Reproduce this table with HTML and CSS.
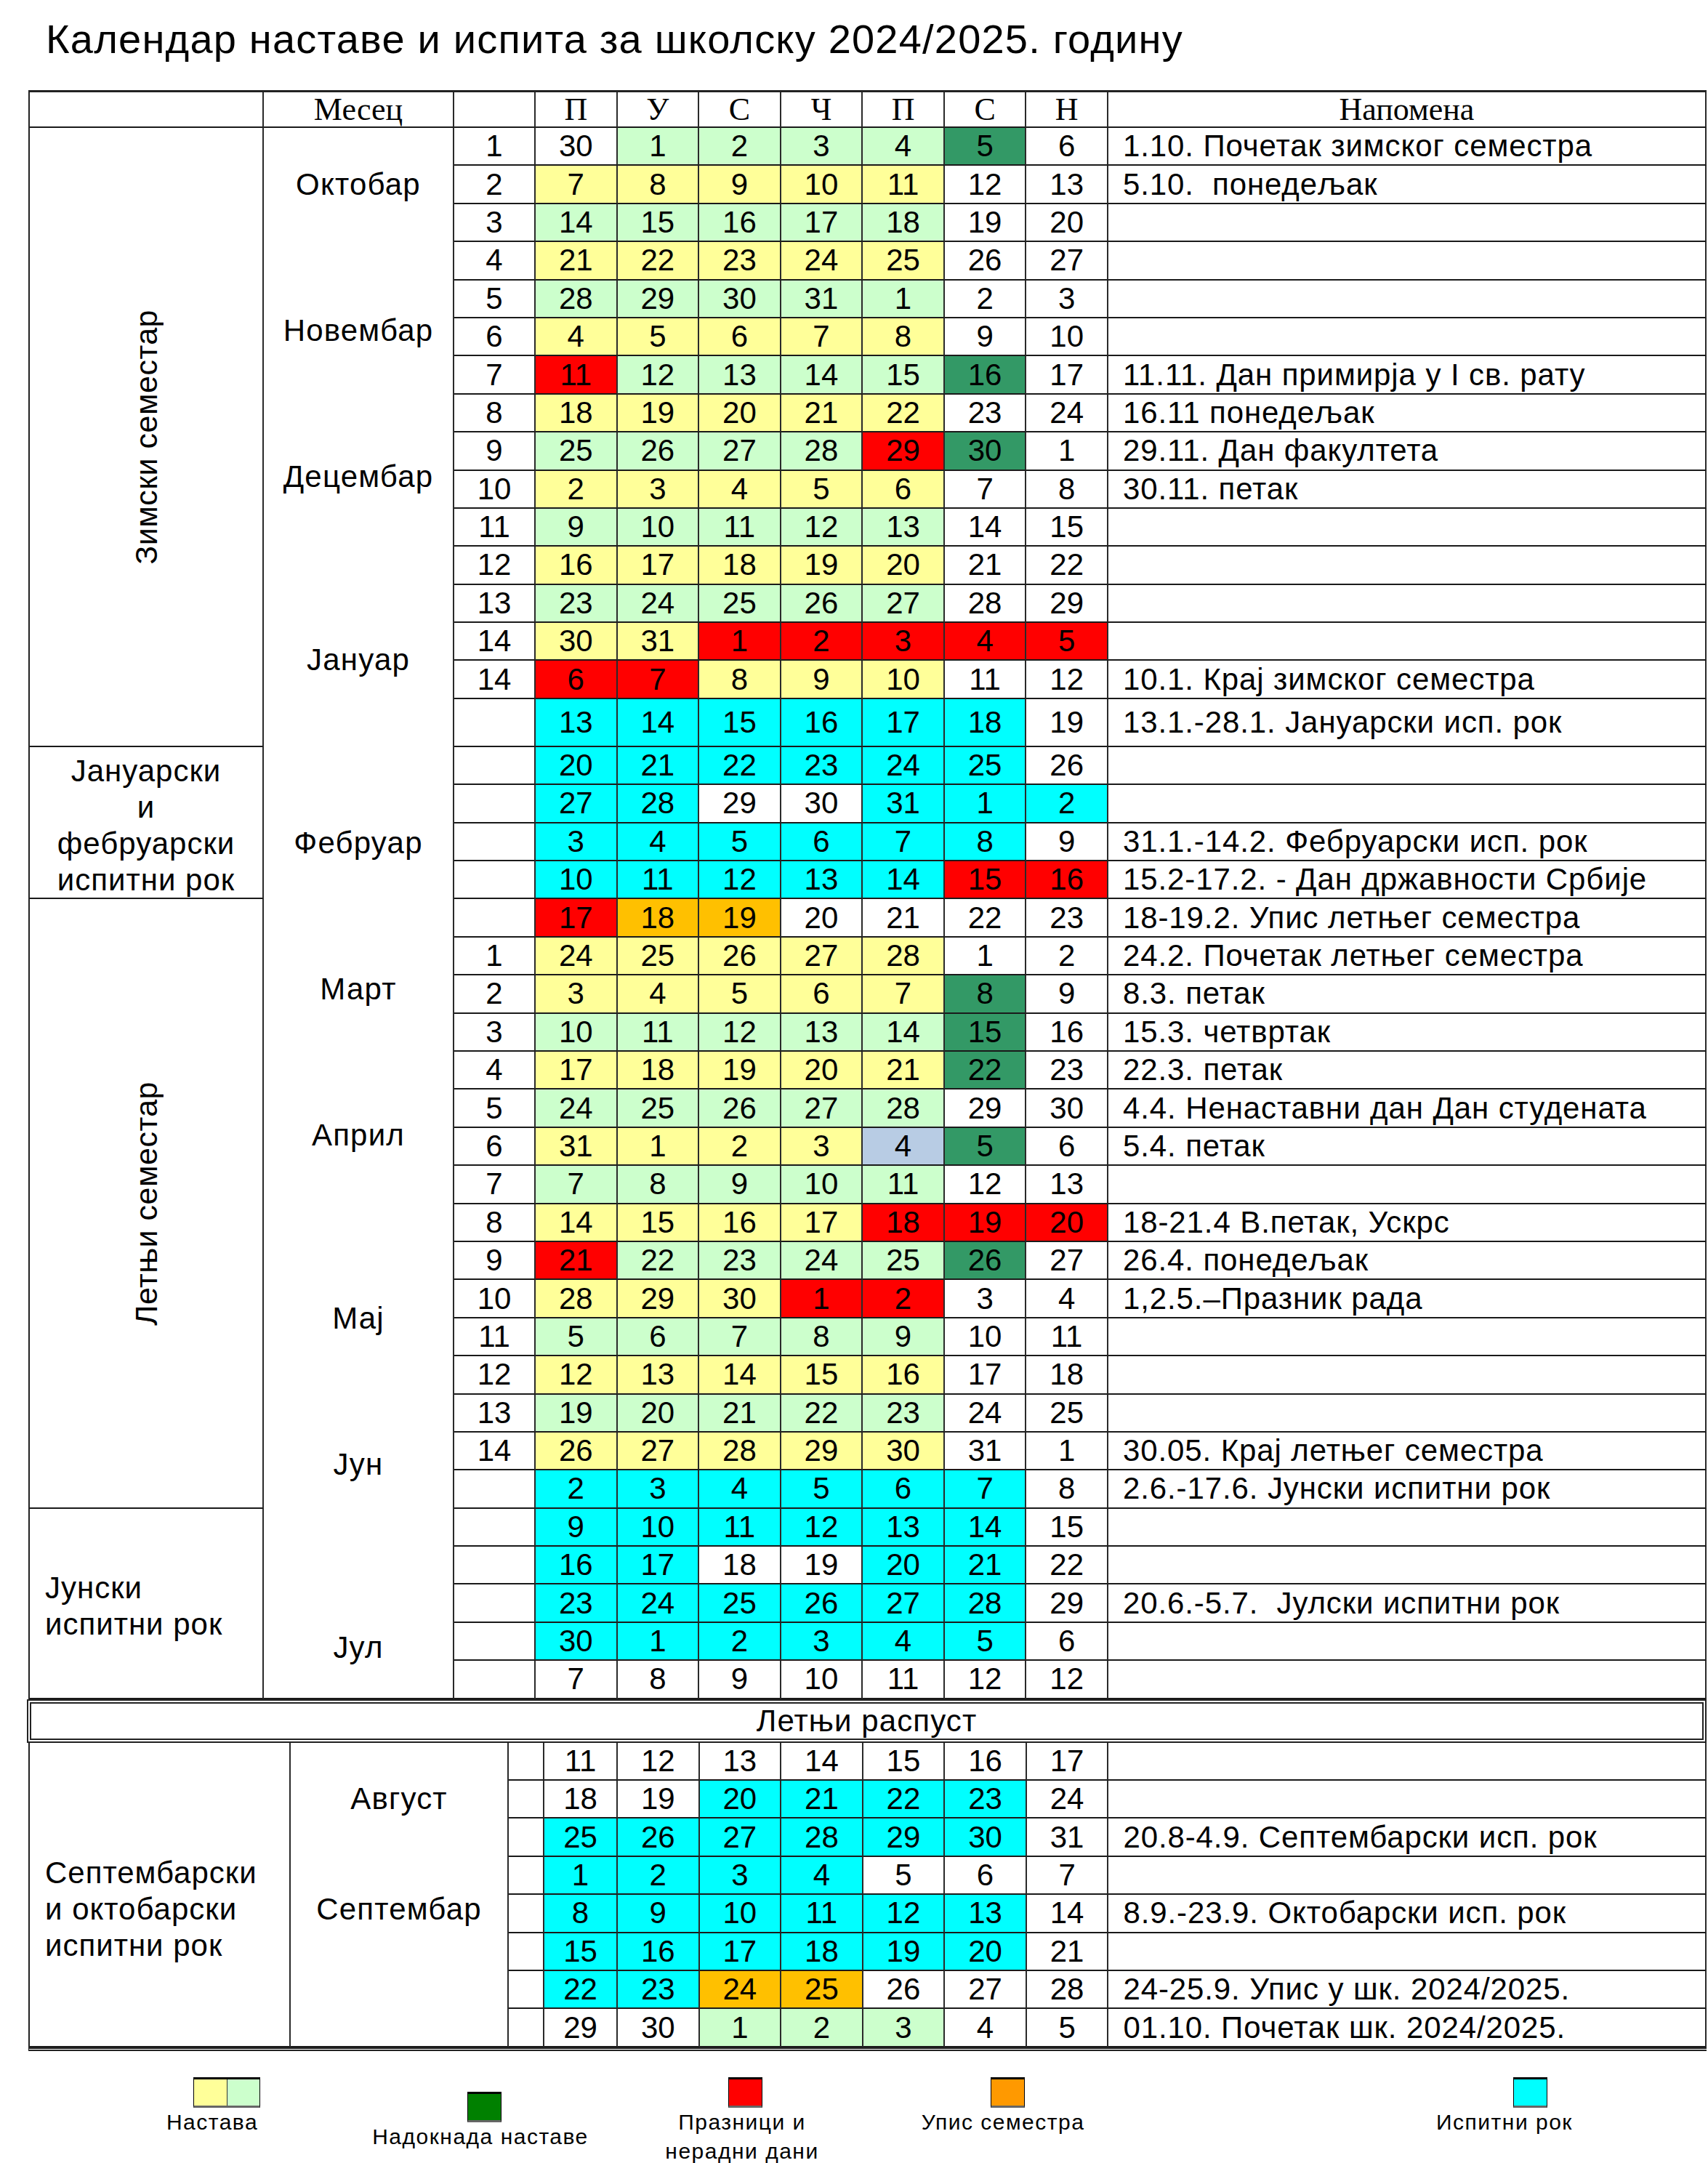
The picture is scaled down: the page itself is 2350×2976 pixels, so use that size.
FILE: index.html
```html
<!DOCTYPE html>
<html lang="sr">
<head>
<meta charset="utf-8">
<title>Календар наставе и испита</title>
<link rel="stylesheet" href="styles.css">
</head>
<body>
<h1 class="title">Календар наставе и испита за школску 2024/2025. годину</h1>

<div class="cal cal-top">
  <div class="c h"></div><div class="c h">Месец</div><div class="c h"></div>
  <div class="c h">П</div><div class="c h">У</div><div class="c h">С</div><div class="c h">Ч</div><div class="c h">П</div><div class="c h">С</div><div class="c h">Н</div>
  <div class="c h">Напомена</div>

  <div class="c sem sem-zimski"><span class="vt">Зимски семестар</span></div>
  <div class="c sem sem-jan"><div class="ml">Јануарски<br>и<br>фебруарски<br>испитни рок</div></div>
  <div class="c sem sem-letnji"><span class="vt">Летњи семестар</span></div>
  <div class="c sem sem-jun left"><div class="ml">Јунски<br>испитни рок</div></div>
  <div class="c months months-top">
    <div class="mo">Октобар</div>
    <div class="mo mo-s">Новембар</div>
    <div class="mo mo-s">Децембар</div>
    <div class="mo mo-l">Јануар</div>
    <div class="mo mo-l">Фебруар</div>
    <div class="mo mo-s">Март</div>
    <div class="mo mo-s">Април</div>
    <div class="mo mo-l">Мај</div>
    <div class="mo mo-s">Јун</div>
    <div class="mo mo-l">Јул</div>
  </div>

  <div class="c">1</div><div class="c">30</div><div class="c g">1</div><div class="c g">2</div><div class="c g">3</div><div class="c g">4</div><div class="c dg">5</div><div class="c">6</div><div class="c n">1.10. Почетак зимског семестра</div>
  <div class="c">2</div><div class="c y">7</div><div class="c y">8</div><div class="c y">9</div><div class="c y">10</div><div class="c y">11</div><div class="c">12</div><div class="c">13</div><div class="c n">5.10.  понедељак</div>
  <div class="c">3</div><div class="c g">14</div><div class="c g">15</div><div class="c g">16</div><div class="c g">17</div><div class="c g">18</div><div class="c">19</div><div class="c">20</div><div class="c n"></div>
  <div class="c">4</div><div class="c y">21</div><div class="c y">22</div><div class="c y">23</div><div class="c y">24</div><div class="c y">25</div><div class="c">26</div><div class="c">27</div><div class="c n"></div>
  <div class="c">5</div><div class="c g">28</div><div class="c g">29</div><div class="c g">30</div><div class="c g">31</div><div class="c g">1</div><div class="c">2</div><div class="c">3</div><div class="c n"></div>
  <div class="c">6</div><div class="c y">4</div><div class="c y">5</div><div class="c y">6</div><div class="c y">7</div><div class="c y">8</div><div class="c">9</div><div class="c">10</div><div class="c n"></div>
  <div class="c">7</div><div class="c r">11</div><div class="c g">12</div><div class="c g">13</div><div class="c g">14</div><div class="c g">15</div><div class="c dg">16</div><div class="c">17</div><div class="c n">11.11. Дан примирја у I св. рату</div>
  <div class="c">8</div><div class="c y">18</div><div class="c y">19</div><div class="c y">20</div><div class="c y">21</div><div class="c y">22</div><div class="c">23</div><div class="c">24</div><div class="c n">16.11 понедељак</div>
  <div class="c">9</div><div class="c g">25</div><div class="c g">26</div><div class="c g">27</div><div class="c g">28</div><div class="c r">29</div><div class="c dg">30</div><div class="c">1</div><div class="c n">29.11. Дан факултета</div>
  <div class="c">10</div><div class="c y">2</div><div class="c y">3</div><div class="c y">4</div><div class="c y">5</div><div class="c y">6</div><div class="c">7</div><div class="c">8</div><div class="c n">30.11. петак</div>
  <div class="c">11</div><div class="c g">9</div><div class="c g">10</div><div class="c g">11</div><div class="c g">12</div><div class="c g">13</div><div class="c">14</div><div class="c">15</div><div class="c n"></div>
  <div class="c">12</div><div class="c y">16</div><div class="c y">17</div><div class="c y">18</div><div class="c y">19</div><div class="c y">20</div><div class="c">21</div><div class="c">22</div><div class="c n"></div>
  <div class="c">13</div><div class="c g">23</div><div class="c g">24</div><div class="c g">25</div><div class="c g">26</div><div class="c g">27</div><div class="c">28</div><div class="c">29</div><div class="c n"></div>
  <div class="c">14</div><div class="c y">30</div><div class="c y">31</div><div class="c r">1</div><div class="c r">2</div><div class="c r">3</div><div class="c r">4</div><div class="c r">5</div><div class="c n"></div>
  <div class="c">14</div><div class="c r">6</div><div class="c r">7</div><div class="c y">8</div><div class="c y">9</div><div class="c y">10</div><div class="c">11</div><div class="c">12</div><div class="c n">10.1. Крај зимског семестра</div>
  <div class="c"></div><div class="c cy">13</div><div class="c cy">14</div><div class="c cy">15</div><div class="c cy">16</div><div class="c cy">17</div><div class="c cy">18</div><div class="c">19</div><div class="c n">13.1.-28.1. Јануарски исп. рок</div>
  <div class="c"></div><div class="c cy">20</div><div class="c cy">21</div><div class="c cy">22</div><div class="c cy">23</div><div class="c cy">24</div><div class="c cy">25</div><div class="c">26</div><div class="c n"></div>
  <div class="c"></div><div class="c cy">27</div><div class="c cy">28</div><div class="c">29</div><div class="c">30</div><div class="c cy">31</div><div class="c cy">1</div><div class="c cy">2</div><div class="c n"></div>
  <div class="c"></div><div class="c cy">3</div><div class="c cy">4</div><div class="c cy">5</div><div class="c cy">6</div><div class="c cy">7</div><div class="c cy">8</div><div class="c">9</div><div class="c n">31.1.-14.2. Фебруарски исп. рок</div>
  <div class="c"></div><div class="c cy">10</div><div class="c cy">11</div><div class="c cy">12</div><div class="c cy">13</div><div class="c cy">14</div><div class="c r">15</div><div class="c r">16</div><div class="c n">15.2-17.2. - Дан државности Србије</div>
  <div class="c"></div><div class="c r">17</div><div class="c o">18</div><div class="c o">19</div><div class="c">20</div><div class="c">21</div><div class="c">22</div><div class="c">23</div><div class="c n">18-19.2. Упис летњег семестра</div>
  <div class="c">1</div><div class="c y">24</div><div class="c y">25</div><div class="c y">26</div><div class="c y">27</div><div class="c y">28</div><div class="c">1</div><div class="c">2</div><div class="c n">24.2. Почетак летњег семестра</div>
  <div class="c">2</div><div class="c y">3</div><div class="c y">4</div><div class="c y">5</div><div class="c y">6</div><div class="c y">7</div><div class="c dg">8</div><div class="c">9</div><div class="c n">8.3. петак</div>
  <div class="c">3</div><div class="c g">10</div><div class="c g">11</div><div class="c g">12</div><div class="c g">13</div><div class="c g">14</div><div class="c dg">15</div><div class="c">16</div><div class="c n">15.3. четвртак</div>
  <div class="c">4</div><div class="c y">17</div><div class="c y">18</div><div class="c y">19</div><div class="c y">20</div><div class="c y">21</div><div class="c dg">22</div><div class="c">23</div><div class="c n">22.3. петак</div>
  <div class="c">5</div><div class="c g">24</div><div class="c g">25</div><div class="c g">26</div><div class="c g">27</div><div class="c g">28</div><div class="c">29</div><div class="c">30</div><div class="c n">4.4. Ненаставни дан Дан студената</div>
  <div class="c">6</div><div class="c y">31</div><div class="c y">1</div><div class="c y">2</div><div class="c y">3</div><div class="c lb">4</div><div class="c dg">5</div><div class="c">6</div><div class="c n">5.4. петак</div>
  <div class="c">7</div><div class="c g">7</div><div class="c g">8</div><div class="c g">9</div><div class="c g">10</div><div class="c g">11</div><div class="c">12</div><div class="c">13</div><div class="c n"></div>
  <div class="c">8</div><div class="c y">14</div><div class="c y">15</div><div class="c y">16</div><div class="c y">17</div><div class="c r">18</div><div class="c r">19</div><div class="c r">20</div><div class="c n">18-21.4 В.петак, Ускрс</div>
  <div class="c">9</div><div class="c r">21</div><div class="c g">22</div><div class="c g">23</div><div class="c g">24</div><div class="c g">25</div><div class="c dg">26</div><div class="c">27</div><div class="c n">26.4. понедељак</div>
  <div class="c">10</div><div class="c y">28</div><div class="c y">29</div><div class="c y">30</div><div class="c r">1</div><div class="c r">2</div><div class="c">3</div><div class="c">4</div><div class="c n">1,2.5.–Празник рада</div>
  <div class="c">11</div><div class="c g">5</div><div class="c g">6</div><div class="c g">7</div><div class="c g">8</div><div class="c g">9</div><div class="c">10</div><div class="c">11</div><div class="c n"></div>
  <div class="c">12</div><div class="c y">12</div><div class="c y">13</div><div class="c y">14</div><div class="c y">15</div><div class="c y">16</div><div class="c">17</div><div class="c">18</div><div class="c n"></div>
  <div class="c">13</div><div class="c g">19</div><div class="c g">20</div><div class="c g">21</div><div class="c g">22</div><div class="c g">23</div><div class="c">24</div><div class="c">25</div><div class="c n"></div>
  <div class="c">14</div><div class="c y">26</div><div class="c y">27</div><div class="c y">28</div><div class="c y">29</div><div class="c y">30</div><div class="c">31</div><div class="c">1</div><div class="c n">30.05. Крај летњег семестра</div>
  <div class="c"></div><div class="c cy">2</div><div class="c cy">3</div><div class="c cy">4</div><div class="c cy">5</div><div class="c cy">6</div><div class="c cy">7</div><div class="c">8</div><div class="c n">2.6.-17.6. Јунски испитни рок</div>
  <div class="c"></div><div class="c cy">9</div><div class="c cy">10</div><div class="c cy">11</div><div class="c cy">12</div><div class="c cy">13</div><div class="c cy">14</div><div class="c">15</div><div class="c n"></div>
  <div class="c"></div><div class="c cy">16</div><div class="c cy">17</div><div class="c">18</div><div class="c">19</div><div class="c cy">20</div><div class="c cy">21</div><div class="c">22</div><div class="c n"></div>
  <div class="c"></div><div class="c cy">23</div><div class="c cy">24</div><div class="c cy">25</div><div class="c cy">26</div><div class="c cy">27</div><div class="c cy">28</div><div class="c">29</div><div class="c n">20.6.-5.7.  Јулски испитни рок</div>
  <div class="c"></div><div class="c cy">30</div><div class="c cy">1</div><div class="c cy">2</div><div class="c cy">3</div><div class="c cy">4</div><div class="c cy">5</div><div class="c">6</div><div class="c n"></div>
  <div class="c"></div><div class="c">7</div><div class="c">8</div><div class="c">9</div><div class="c">10</div><div class="c">11</div><div class="c">12</div><div class="c">12</div><div class="c n"></div>
</div>

<div class="summer">Летњи распуст</div>

<div class="cal cal-bottom">
  <div class="c sem sem-sep left"><div class="ml">Септембарски<br>и октобарски<br>испитни рок</div></div>
  <div class="c months months-bottom">
    <div class="mo">Август</div>
    <div class="mo mo-b">Септембар</div>
  </div>

  <div class="c"></div><div class="c">11</div><div class="c">12</div><div class="c">13</div><div class="c">14</div><div class="c">15</div><div class="c">16</div><div class="c">17</div><div class="c n"></div>
  <div class="c"></div><div class="c">18</div><div class="c">19</div><div class="c cy">20</div><div class="c cy">21</div><div class="c cy">22</div><div class="c cy">23</div><div class="c">24</div><div class="c n"></div>
  <div class="c"></div><div class="c cy">25</div><div class="c cy">26</div><div class="c cy">27</div><div class="c cy">28</div><div class="c cy">29</div><div class="c cy">30</div><div class="c">31</div><div class="c n">20.8-4.9. Септембарски исп. рок</div>
  <div class="c"></div><div class="c cy">1</div><div class="c cy">2</div><div class="c cy">3</div><div class="c cy">4</div><div class="c">5</div><div class="c">6</div><div class="c">7</div><div class="c n"></div>
  <div class="c"></div><div class="c cy">8</div><div class="c cy">9</div><div class="c cy">10</div><div class="c cy">11</div><div class="c cy">12</div><div class="c cy">13</div><div class="c">14</div><div class="c n">8.9.-23.9. Октобарски исп. рок</div>
  <div class="c"></div><div class="c cy">15</div><div class="c cy">16</div><div class="c cy">17</div><div class="c cy">18</div><div class="c cy">19</div><div class="c cy">20</div><div class="c">21</div><div class="c n"></div>
  <div class="c"></div><div class="c cy">22</div><div class="c cy">23</div><div class="c o">24</div><div class="c o">25</div><div class="c">26</div><div class="c">27</div><div class="c">28</div><div class="c n">24-25.9. Упис у шк. 2024/2025.</div>
  <div class="c"></div><div class="c">29</div><div class="c">30</div><div class="c g">1</div><div class="c g">2</div><div class="c g">3</div><div class="c">4</div><div class="c">5</div><div class="c n">01.10. Почетак шк. 2024/2025.</div>
</div>

<div class="legend">
  <div class="lg lg-1">
    <div class="sw sw-double"><span class="y"></span><span class="g"></span></div>
    <div class="lg-text">Настава</div>
  </div>
  <div class="lg lg-2">
    <div class="sw sw-dg"></div>
    <div class="lg-text">Надокнада наставе</div>
  </div>
  <div class="lg lg-3">
    <div class="sw sw-r"></div>
    <div class="lg-text">Празници и<br>нерадни дани</div>
  </div>
  <div class="lg lg-4">
    <div class="sw sw-o"></div>
    <div class="lg-text">Упис семестра</div>
  </div>
  <div class="lg lg-5">
    <div class="sw sw-c"></div>
    <div class="lg-text">Испитни рок</div>
  </div>
</div>
</body>
</html>
```

FILE: styles.css
```css
* { box-sizing: border-box; }

body {
  margin: 0;
  width: 2350px;
  background: #fff;
  color: #000;
  font-family: "Liberation Sans", Arial, sans-serif;
}

.title {
  margin: 0;
  height: 124px;
  padding: 22px 0 0 63px;
  font-size: 56px;
  line-height: 64px;
  font-weight: normal;
  letter-spacing: 1.2px;
}

.cal {
  display: grid;
  margin-left: 39px;
  width: 2309px;
  border-left: 2px solid #222;
}

.cal-top {
  border-top: 3px solid #222;
  grid-template-columns: 322px 262px 112px repeat(7, 112.57px) 1fr;
  grid-template-rows: 49px repeat(15, 52.4px) 66px repeat(25, 52.4px);
}

.cal-bottom {
  grid-template-columns: 359px 300px 49px 101px repeat(6, 112.57px) 1fr;
  grid-template-rows: repeat(8, 52.4px);
  border-bottom: 5px double #222;
}

.c {
  display: flex;
  align-items: center;
  justify-content: center;
  border-right: 2px solid #2a2a2a;
  border-bottom: 2px solid #1a1a1a;
  font-size: 42px;
  white-space: nowrap;
  overflow: hidden;
}

.h {
  font-family: "Liberation Serif", "Times New Roman", serif;
  font-size: 44px;
}

.n {
  justify-content: flex-start;
  padding-left: 20px;
  white-space: pre;
  letter-spacing: 0.9px;
}

.y { background: #ffff99; }
.g { background: #ccffcc; }
.dg { background: #339966; }
.r { background: #ff0000; }
.o { background: #ffc000; }
.cy { background: #00ffff; }
.lb { background: #b8cce4; }

.sem { grid-column: 1; }
.sem-zimski { grid-row: 2 / span 16; }
.sem-jan { grid-row: 18 / span 4; padding-top: 8px; }
.sem-letnji { grid-row: 22 / span 16; }
.sem-jun { grid-row: 38 / span 5; padding-top: 8px; }
.sem-sep { grid-row: 1 / span 8; padding-top: 42px; }

.left { justify-content: flex-start; padding-left: 21px; }

.ml {
  line-height: 50px;
  text-align: center;
  white-space: nowrap;
  letter-spacing: 1px;
}
.left .ml { text-align: left; }

.vt {
  writing-mode: vertical-rl;
  transform: rotate(180deg);
  font-size: 43px;
  letter-spacing: 0.5px;
}

.months {
  grid-column: 2;
  flex-direction: column;
  justify-content: flex-start;
}
.months-top { grid-row: 2 / span 41; padding-top: 53px; }
.months-bottom { grid-row: 1 / span 8; padding-top: 52px; }

.mo { height: 50px; line-height: 50px; letter-spacing: 1.2px; }
.mo-s { margin-top: 151px; }
.mo-l { margin-top: 202px; }
.mo-b { margin-top: 102px; }

.summer {
  margin-left: 37px;
  width: 2311px;
  height: 60px;
  border: 6px double #222;
  display: flex;
  align-items: center;
  justify-content: center;
  font-size: 42px;
  letter-spacing: 1.1px;
}

.legend {
  display: flex;
  align-items: flex-start;
  margin-top: 36px;
  padding-left: 200px;
}

.lg { display: flex; flex-direction: column; }
.lg-1 { width: 184px; }
.lg-2 { width: 322px; margin-left: 116px; margin-top: 20px; }
.lg-3 { width: 242px; margin-left: 78px; }
.lg-4 { width: 260px; margin-left: 108px; }
.lg-5 { width: 240px; margin-left: 440px; }

.sw {
  height: 42px;
  width: 47px;
  border: 1px solid #000;
  border-top: 3px solid #000;
  border-bottom: 3px solid #666;
}
.lg-1 .sw { margin-left: 66px; }
.lg-2 .sw { margin-left: 143px; }
.lg-3 .sw { margin-left: 102px; }
.lg-4 .sw { margin-left: 113px; }
.lg-5 .sw { margin-left: 132px; }

.sw-double { width: 92px; display: flex; }
.sw-double span { flex: 1; }
.sw-double .y { border-right: 1px solid #333; }
.sw-dg { background: #008000; }
.sw-r { background: #ff0000; }
.sw-o { background: #ff9900; }
.sw-c { background: #00ffff; }

.lg-text {
  text-align: center;
  font-size: 30px;
  line-height: 40px;
  letter-spacing: 1.5px;
  white-space: nowrap;
}
```
